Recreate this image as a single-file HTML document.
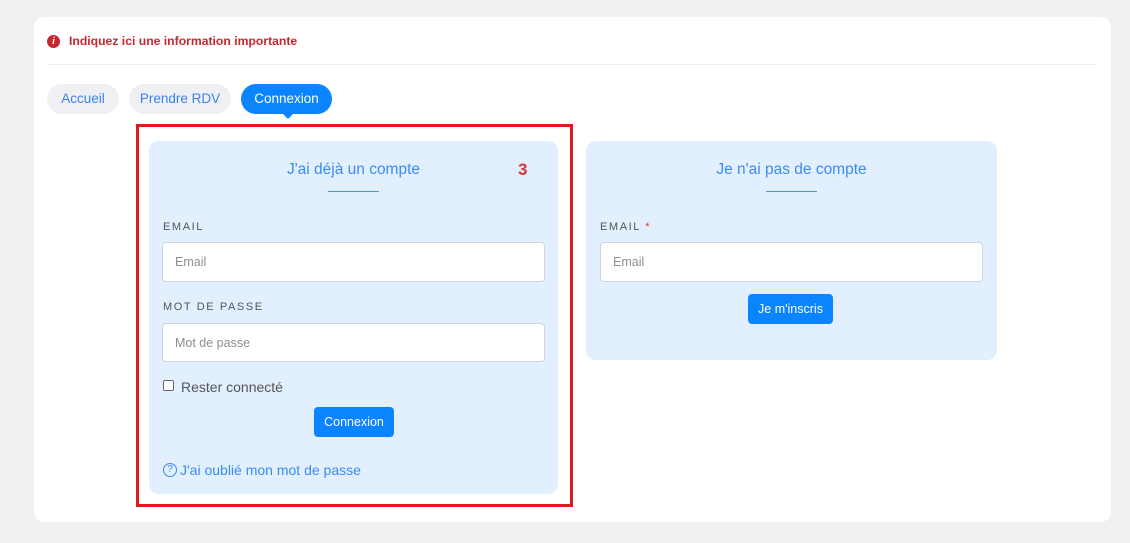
<!DOCTYPE html>
<html><head><meta charset="utf-8"><style>
*{box-sizing:border-box;margin:0;padding:0}
body{width:1130px;height:543px;background:#f0f1f3;font-family:"Liberation Sans",sans-serif;position:relative;overflow:hidden}
.abs{position:absolute}
.main{left:34px;top:17px;width:1077px;height:505px;background:#fff;border-radius:10px}
.alert{left:47px;top:34px;color:#c8262e;font-weight:bold;font-size:12.2px;display:flex;align-items:center;gap:9px}
.ic{width:13px;height:13px;border-radius:50%;background:#c8262e;color:#fff;font-size:10px;font-family:"Liberation Serif",serif;font-style:italic;text-align:center;line-height:13px}
.hr{left:47px;top:64px;width:1050px;height:1px;background:#eceef0}
.tab{top:84px;height:30px;border-radius:15px;background:#eef0f3;color:#3b82f0;font-size:13.5px;line-height:30px;text-align:center}
.tab.on{background:#0a84ff;color:#fff}
.tri{left:282px;top:113px;width:0;height:0;border-left:6px solid transparent;border-right:6px solid transparent;border-top:6px solid #0a84ff}
.red{left:136px;top:124px;width:437px;height:383px;border:3px solid #e0191f}
.card{background:#e1effe;border-radius:10px}
.title{color:#3b8cf0;font-size:15.5px;text-align:center;width:100%}
.ul{height:1px;background:#4a94f5;width:51px}
.lbl{font-size:11px;letter-spacing:1.6px;color:#555}
.inp{height:40px;background:#fff;border:1px solid #cfd4da;border-radius:4px;color:#8a8f95;font-size:12.5px;padding-left:12px;line-height:38px}
.btn{background:#0a84ff;color:#fff;font-size:12.5px;border-radius:4px;text-align:center;line-height:30px;height:30px}
</style></head><body>
<div class="abs main"></div>
<div class="abs alert"><div class="ic">i</div>Indiquez ici une information importante</div>
<div class="abs hr"></div>
<div class="abs tab" style="left:47px;width:72px">Accueil</div>
<div class="abs tab" style="left:129px;width:102px">Prendre RDV</div>
<div class="abs tab on" style="left:241px;width:91px">Connexion</div>
<div class="abs tri"></div>
<div class="abs red"></div>
<div class="abs card" style="left:149px;top:141px;width:409px;height:353px"></div>
<div class="abs title" style="left:149px;width:409px;top:161px">J'ai déjà un compte</div>
<div class="abs ul" style="left:328px;top:191px"></div>
<div class="abs" style="left:518px;top:160px;color:#e0323a;font-weight:bold;font-size:17px">3</div>
<div class="abs lbl" style="left:163px;top:221px">EMAIL</div>
<div class="abs inp" style="left:162px;top:242px;width:383px">Email</div>
<div class="abs lbl" style="left:163px;top:301px">MOT DE PASSE</div>
<div class="abs inp" style="left:162px;top:323px;width:383px;height:39px">Mot de passe</div>
<div class="abs" style="left:163px;top:380px;width:11px;height:11px;border:1px solid #666;border-radius:2px;background:#fff"></div>
<div class="abs" style="left:181px;top:379px;font-size:14px;color:#555">Rester connecté</div>
<div class="abs btn" style="left:314px;top:407px;width:80px">Connexion</div>
<div class="abs" style="left:163px;top:462px;display:flex;align-items:center;gap:3px;color:#3b8cf0;font-size:14px"><div style="width:14px;height:14px;border:1.3px solid #3b8cf0;border-radius:50%;font-size:10px;text-align:center;line-height:12px">?</div>J'ai oublié mon mot de passe</div>
<div class="abs card" style="left:586px;top:141px;width:411px;height:219px"></div>
<div class="abs title" style="left:586px;width:411px;top:161px">Je n'ai pas de compte</div>
<div class="abs ul" style="left:766px;top:191px"></div>
<div class="abs lbl" style="left:600px;top:221px">EMAIL <span style="color:#d33">*</span></div>
<div class="abs inp" style="left:600px;top:242px;width:383px">Email</div>
<div class="abs btn" style="left:748px;top:294px;width:85px">Je m'inscris</div>
</body></html>
